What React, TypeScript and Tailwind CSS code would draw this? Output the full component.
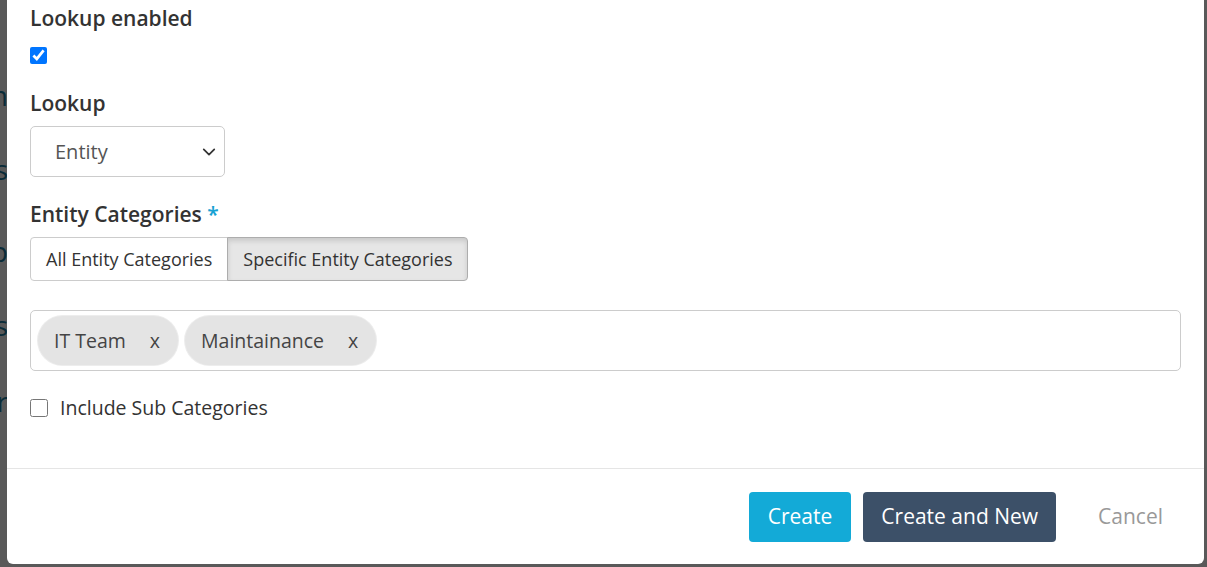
import React from 'react';

const bgRows = [
  { text: 'Item', top: 'mt-[80px]' },
  { text: 'Items', top: 'mt-[44px]' },
  { text: 'Group', top: 'mt-[52px]' },
  { text: 'Items', top: 'mt-[44px]' },
  { text: 'Member', top: 'mt-[46px]' },
];

const Tag: React.FC<{ label: string }> = ({ label }) => (
  <div className="flex h-[49px] items-center rounded-full bg-[#e4e4e4] pl-[16px] pr-[18px] text-[19.5px] text-[#444] shadow-[0_0_0_1px_#ededed]">
    <span>{label}</span>
    <span className="ml-[24px]">x</span>
  </div>
);

const App: React.FC = () => {
  return (
    <div className="relative h-[567px] w-[1207px] overflow-hidden bg-white font-['Open_Sans',sans-serif]">
      {/* page behind the modal */}
      <div className="flex flex-col">
        {bgRows.map((r, i) => (
          <div key={i} className={`${r.top} flex h-[30px] w-[8px] justify-end overflow-hidden text-[28px] leading-[30px] text-[#1f7fa3]`}>
            <span className="whitespace-nowrap">{r.text}</span>
          </div>
        ))}
      </div>
      <div className="absolute inset-0 bg-black/65" />

      {/* modal */}
      <div className="absolute left-[7px] top-[-17px] bottom-[3px] flex w-[1197px] flex-col rounded-[6px] bg-white text-[#333]">
        <div className="flex flex-col px-[23px] pt-[20px] pb-[45px]">
          <label className="text-[21px] font-semibold leading-[30px]">Lookup enabled</label>
          <input type="checkbox" defaultChecked className="mt-[14px] h-[17px] w-[17px] accent-[#0075ff]" />

          <label className="mt-[24px] text-[21px] font-semibold leading-[30px]">Lookup</label>
          <div className="mt-[8px] flex h-[51px] w-[195px] items-center justify-between rounded-[5px] border border-[#ccc] pl-[24px] pr-[8px] text-[20px] text-[#555]">
            <span>Entity</span>
            <svg width="14" height="14" viewBox="0 0 16 16" fill="none" stroke="#333" strokeWidth="2" strokeLinecap="round" strokeLinejoin="round">
              <path d="M2 5l6 6 6-6" />
            </svg>
          </div>

          <label className="mt-[22px] text-[21px] font-semibold leading-[30px]">
            Entity Categories <span className="text-[#17a2d3]">*</span>
          </label>
          <div className="mt-[8px] flex h-[44px] w-fit text-[18px] text-[#333]">
            <button className="rounded-l-[4px] border border-[#ccc] bg-white px-[15px]">All Entity Categories</button>
            <button className="-ml-px rounded-r-[4px] border border-[#adadad] bg-[#e6e6e6] pl-[15px] pr-[14px] shadow-[inset_0_3px_5px_rgba(0,0,0,0.125)]">
              Specific Entity Categories
            </button>
          </div>

          <div className="mt-[29px] flex h-[61px] items-center gap-[7px] rounded-[5px] border border-[#ccc] px-[7px]">
            <Tag label="IT Team" />
            <Tag label="Maintainance" />
          </div>

          <label className="mt-[22px] flex h-[30px] items-center gap-[12px] text-[19.5px] text-[#333]">
            <input type="checkbox" className="h-[18px] w-[18px]" />
            <span>Include Sub Categories</span>
          </label>
        </div>

        <div className="flex items-center justify-end border-t border-[#e5e5e5] pt-[23px] pr-[21px] pb-[22px] text-[21px]">
          <button className="h-[50px] rounded-[4px] bg-[#13aad7] px-[19px] text-white">Create</button>
          <button className="ml-[12px] h-[50px] rounded-[4px] bg-[#3c5068] px-[18px] text-white">Create and New</button>
          <button className="ml-[22px] h-[50px] px-[20px] text-[#999]">Cancel</button>
        </div>
      </div>
    </div>
  );
};

export default App;
